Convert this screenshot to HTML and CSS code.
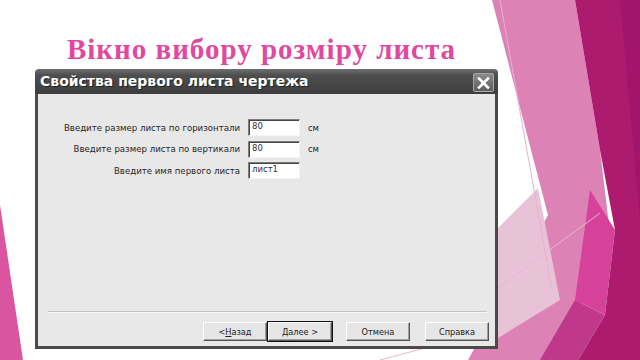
FILE: index.html
```html
<!DOCTYPE html>
<html lang="uk">
<head>
<meta charset="utf-8">
<title>Вікно вибору розміру листа</title>
<link rel="stylesheet" href="styles.css">
</head>
<body>
<svg class="deco" width="640" height="360" viewBox="0 0 640 360" aria-hidden="true">
  <polygon points="0,205 23,360 0,360" fill="#d9559f"/>
  <polygon points="492,0 575,0 600,150 612,250 548,360 468,360 548,215" fill="#dc82b5"/>
  <polygon points="498,228 538,188 560,300 498,338" fill="#e8c3d8"/>
  <polygon points="540,360 575,300 605,315 578,360" fill="#c0388a"/>
  <polygon points="590,190 615,230 605,315 575,300" fill="#d6419a"/>
  <polygon points="575,0 640,0 640,360 578,360 605,315 615,230 600,150" fill="#ad1b6e"/>
  <polygon points="620,0 640,0 640,220" fill="#a3156a"/>
  <line x1="500" y1="0" x2="552" y2="290" stroke="#eab0cf" stroke-width="1"/>
  <line x1="498" y1="288" x2="600" y2="213" stroke="#e7b5d1" stroke-width="1"/>
  <line x1="380" y1="360" x2="440" y2="344" stroke="#eab5d2" stroke-width="1"/>
</svg>
<main class="slide">
  <h1 class="slide-title">Вікно вибору розміру листа</h1>
  <section class="dialog">
    <header class="titlebar">
      <span class="titlebar-text">Свойства первого листа чертежа</span>
      <span class="close-btn">
        <svg width="13" height="12" viewBox="0 0 13 12"><path d="M2 1.5 L11 10.5 M11 1.5 L2 10.5" stroke="#fff" stroke-width="2.6" stroke-linecap="square"/></svg>
      </span>
    </header>
    <div class="dialog-body">
      <div class="form">
        <label class="form-label">Введите размер листа по горизонтали</label>
        <span class="field">80</span>
        <span class="unit">см</span>
        <label class="form-label">Введите размер листа по вертикали</label>
        <span class="field">80</span>
        <span class="unit">см</span>
        <label class="form-label">Введите имя первого листа</label>
        <span class="field">лист1</span>
        <span class="unit"></span>
      </div>
      <div class="spacer"></div>
      <div class="separator"></div>
      <div class="buttons">
        <span class="btn">&lt; <u>Н</u>азад</span>
        <span class="btn btn-default"><u>Д</u>алее &gt;</span>
        <span class="btn btn-gap">Отмена</span>
        <span class="btn btn-gap2">Справка</span>
      </div>
    </div>
  </section>
</main>
</body>
</html>
```
FILE: styles.css
```css
html, body {
  margin: 0;
  padding: 0;
}
body {
  width: 640px;
  height: 360px;
  overflow: hidden;
  position: relative;
  background: #ffffff;
  font-family: "DejaVu Sans", "Liberation Sans", sans-serif;
}
.deco {
  position: absolute;
  left: 0;
  top: 0;
  z-index: 0;
}
.slide {
  position: relative;
  z-index: 1;
  display: flex;
  flex-direction: column;
  padding-top: 34px;
}
.slide-title {
  margin: 0;
  width: 453px;
  margin-left: 35px;
  text-align: center;
  font-family: "Liberation Serif", serif;
  font-weight: bold;
  font-size: 29px;
  letter-spacing: 1px;
  line-height: 30px;
  color: #e2489e;
}
.dialog {
  margin-top: 5px;
  margin-left: 35px;
  width: 463px;
  height: 280px;
  display: flex;
  flex-direction: column;
  border-radius: 4px 4px 0 0;
  overflow: hidden;
}
.titlebar {
  height: 25px;
  flex: none;
  display: flex;
  justify-content: space-between;
  align-items: flex-start;
  padding: 0 4px 0 5px;
  background: linear-gradient(#707070 0%, #4e4e4e 25%, #444444 70%, #3d3d3d 100%);
}
.titlebar-text {
  color: #ffffff;
  font-weight: bold;
  font-size: 14px;
  line-height: 25px;
  text-shadow: 1px 1px 0 #222;
}
.close-btn {
  margin-top: 4px;
  width: 19px;
  height: 17px;
  border: 1px solid #a8a8a8;
  border-radius: 2px;
  background: linear-gradient(#8a8a8a, #5e5e5e);
  display: flex;
  align-items: center;
  justify-content: center;
}
.dialog-body {
  flex: 1;
  display: flex;
  flex-direction: column;
  background: #e8e8e8;
  border: 3px solid #4a4a4a;
  border-top: 0;
}
.form {
  display: grid;
  grid-template-columns: 202px 52px 40px;
  column-gap: 8px;
  row-gap: 4.5px;
  padding-top: 25px;
  align-items: center;
}
.form-label {
  text-align: right;
  font-size: 8.6px;
  color: #262626;
  white-space: nowrap;
}
.field {
  height: 17px;
  box-sizing: border-box;
  background: #ffffff;
  border: 1px solid;
  border-color: #7d7d7d #f4f4f4 #f4f4f4 #7d7d7d;
  box-shadow: inset 1px 1px 0 #444;
  font-size: 8.5px;
  line-height: 13px;
  padding-left: 3px;
  color: #333;
}
.unit {
  font-size: 8.4px;
  color: #222;
}
.spacer {
  flex: 1;
}
.separator {
  margin: 0 8px 0 10px;
  height: 1px;
  background: #c4c4c4;
  border-bottom: 1px solid #f8f8f8;
}
.buttons {
  display: flex;
  justify-content: flex-end;
  padding: 9px 6px 5px 0;
}
.btn {
  width: 64px;
  height: 19px;
  box-sizing: border-box;
  display: flex;
  align-items: center;
  justify-content: center;
  background: #e6e6e6;
  border: 1px solid;
  border-color: #ffffff #555555 #555555 #ffffff;
  box-shadow: inset -1px -1px 0 #a0a0a0;
  font-size: 8.2px;
  color: #222;
}
.btn u {
  text-decoration-thickness: 1px;
}
.btn-default {
  margin-left: 1px;
  outline: 1px solid #111;
}
.btn-gap {
  margin-left: 14px;
}
.btn-gap2 {
  margin-left: 15px;
}
```
